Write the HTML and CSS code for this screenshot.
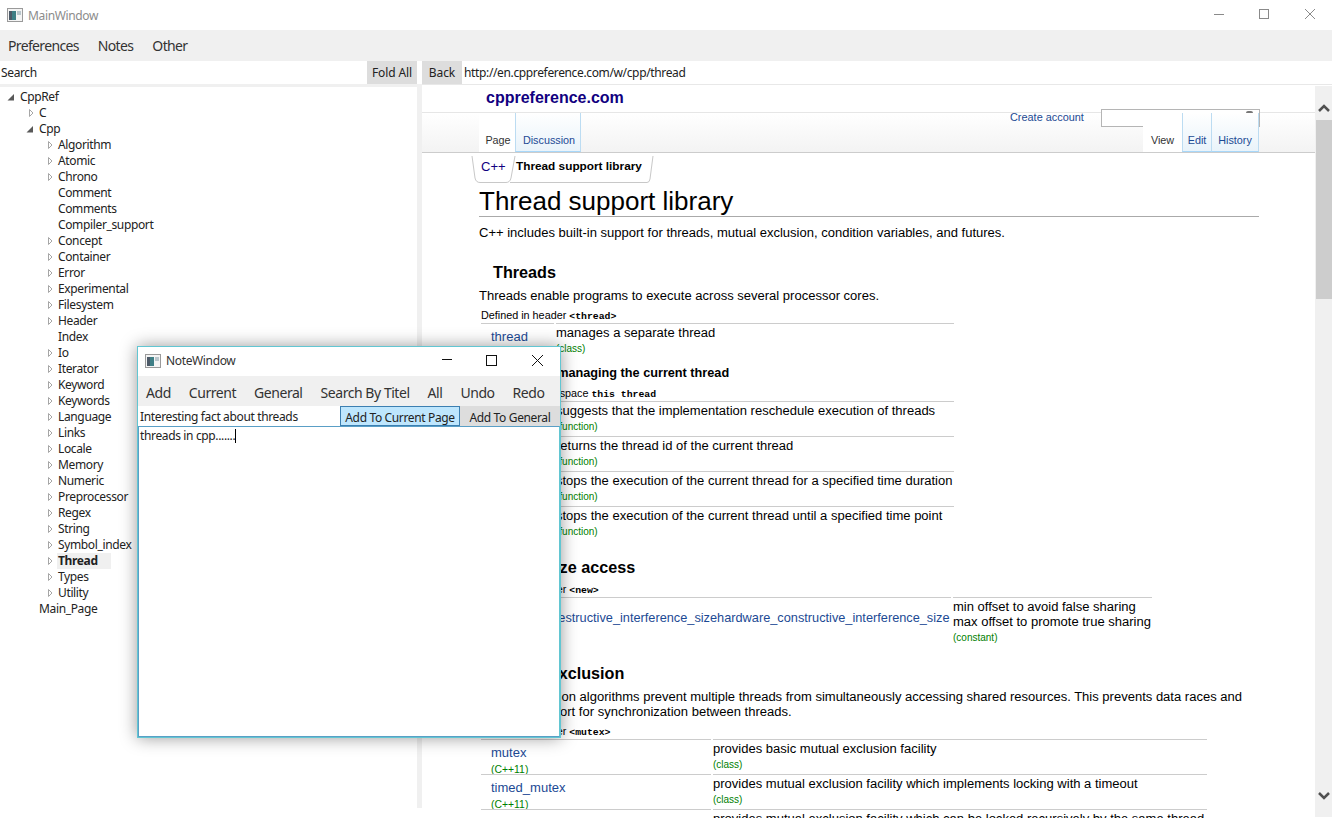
FILE: index.html
```html
<!DOCTYPE html>
<html lang="en">
  <head>
    <meta charset="UTF-8" />
    <title>MainWindow</title>
    <link rel="stylesheet" href="styles.css">
  </head>
  <body>
    <svg class="defs" width="0" height="0">
      <symbol id="tw-closed" viewBox="0 0 10 10"><path d="M4.5 1.5 L8 5 L4.5 8.5 Z" fill="#fff" stroke="#a6a6a6" /></symbol>
      <symbol id="tw-open" viewBox="0 0 10 10"><path d="M8 2 V8.5 H1.5 Z" fill="#595959" /></symbol>
      <symbol id="app-icon" viewBox="0 0 16 14">
        <rect x="0.5" y="0.5" width="15" height="13" fill="#f4f4f4" stroke="#9a9a9a" />
        <rect x="2" y="3" width="7" height="9" fill="#3f7f86" />
        <rect x="2" y="3" width="3" height="9" fill="#4d5a68" />
        <rect x="10" y="3" width="4" height="4" fill="#b9c6cc" />
      </symbol>
    </svg>

    <div class="app">
      <div class="titlebar">
        <svg class="app-icon"><use href="#app-icon" /></svg>
        <span class="title">MainWindow</span>
        <div class="win-btns">
          <svg width="46" height="30" viewBox="0 0 46 30"><path d="M20 14.5 H30" /></svg>
          <svg width="46" height="30" viewBox="0 0 46 30"><rect x="19.5" y="9.5" width="9" height="9" /></svg>
          <svg width="46" height="30" viewBox="0 0 46 30"><path d="M19 9 L29 19 M29 9 L19 19" /></svg>
        </div>
      </div>

      <div class="menubar">
        <span>Preferences</span>
        <span>Notes</span>
        <span>Other</span>
      </div>

      <div class="main">
        <div class="left">
          <div class="searchrow">
            <span class="searchbox">Search</span>
            <span class="btn foldall">Fold All</span>
          </div>
          <ul class="tree">
            <li>
              <div class="node"><svg class="tw"><use href="#tw-open" /></svg>CppRef</div>
              <ul>
                <li><div class="node"><svg class="tw"><use href="#tw-closed" /></svg>C</div></li>
                <li>
                  <div class="node"><svg class="tw"><use href="#tw-open" /></svg>Cpp</div>
                  <ul>
                    <li><div class="node"><svg class="tw"><use href="#tw-closed" /></svg>Algorithm</div></li>
                    <li><div class="node"><svg class="tw"><use href="#tw-closed" /></svg>Atomic</div></li>
                    <li><div class="node"><svg class="tw"><use href="#tw-closed" /></svg>Chrono</div></li>
                    <li><div class="node leaf">Comment</div></li>
                    <li><div class="node leaf">Comments</div></li>
                    <li><div class="node leaf">Compiler_support</div></li>
                    <li><div class="node"><svg class="tw"><use href="#tw-closed" /></svg>Concept</div></li>
                    <li><div class="node"><svg class="tw"><use href="#tw-closed" /></svg>Container</div></li>
                    <li><div class="node"><svg class="tw"><use href="#tw-closed" /></svg>Error</div></li>
                    <li><div class="node"><svg class="tw"><use href="#tw-closed" /></svg>Experimental</div></li>
                    <li><div class="node"><svg class="tw"><use href="#tw-closed" /></svg>Filesystem</div></li>
                    <li><div class="node"><svg class="tw"><use href="#tw-closed" /></svg>Header</div></li>
                    <li><div class="node leaf">Index</div></li>
                    <li><div class="node"><svg class="tw"><use href="#tw-closed" /></svg>Io</div></li>
                    <li><div class="node"><svg class="tw"><use href="#tw-closed" /></svg>Iterator</div></li>
                    <li><div class="node"><svg class="tw"><use href="#tw-closed" /></svg>Keyword</div></li>
                    <li><div class="node"><svg class="tw"><use href="#tw-closed" /></svg>Keywords</div></li>
                    <li><div class="node"><svg class="tw"><use href="#tw-closed" /></svg>Language</div></li>
                    <li><div class="node"><svg class="tw"><use href="#tw-closed" /></svg>Links</div></li>
                    <li><div class="node"><svg class="tw"><use href="#tw-closed" /></svg>Locale</div></li>
                    <li><div class="node"><svg class="tw"><use href="#tw-closed" /></svg>Memory</div></li>
                    <li><div class="node"><svg class="tw"><use href="#tw-closed" /></svg>Numeric</div></li>
                    <li><div class="node"><svg class="tw"><use href="#tw-closed" /></svg>Preprocessor</div></li>
                    <li><div class="node"><svg class="tw"><use href="#tw-closed" /></svg>Regex</div></li>
                    <li><div class="node"><svg class="tw"><use href="#tw-closed" /></svg>String</div></li>
                    <li><div class="node"><svg class="tw"><use href="#tw-closed" /></svg>Symbol_index</div></li>
                    <li><div class="node"><svg class="tw"><use href="#tw-closed" /></svg><b class="selected">Thread</b></div></li>
                    <li><div class="node"><svg class="tw"><use href="#tw-closed" /></svg>Types</div></li>
                    <li><div class="node"><svg class="tw"><use href="#tw-closed" /></svg>Utility</div></li>
                  </ul>
                </li>
                <li><div class="node leaf">Main_Page</div></li>
              </ul>
            </li>
          </ul>
        </div>

        <div class="splitter"></div>

        <div class="right">
          <div class="urlrow">
            <span class="btn back">Back</span>
            <span class="url">http://en.cppreference.com/w/cpp/thread</span>
          </div>
          <div class="browser">
            <div class="webpage">
              <div class="site-head"><span class="logo">cppreference.com</span></div>
              <div class="site-nav">
                <span class="create">Create account</span>
                <span class="site-search"></span>
                <div class="tabs">
                  <span class="tab current t-page">Page</span>
                  <span class="tab t-discussion">Discussion</span>
                </div>
                <div class="tabs">
                  <span class="tab current t-view">View</span>
                  <span class="tab t-edit">Edit</span>
                  <span class="tab t-history">History</span>
                </div>
              </div>

              <div class="content">
                <div class="crumbs">
                  <svg class="crumb-lines" width="190" height="31" viewBox="0 0 190 31">
                    <path d="M2 3 L5 25 Q6 29.5 10 29.5 H36 Q40 29.5 41 25 L45 3 M40 29.5 H177 Q179.5 29.5 180 26 L183 3" />
                  </svg>
                  <span class="crumb">C++</span>
                  <b class="crumb-here">Thread support library</b>
                </div>
                <h1>Thread support library</h1>
                <p class="intro">C++ includes built-in support for threads, mutual exclusion, condition variables, and futures.</p>

                <h3>Threads</h3>
                <p class="text">Threads enable programs to execute across several processor cores.</p>
                <div class="defined">Defined in header <code>&lt;thread&gt;</code></div>
                <div class="dsc cols-thread">
                  <div class="dsc-row">
                    <div class="dsc-name"><a>thread</a></div>
                    <div class="dsc-text">manages a separate thread<small>(class)</small></div>
                  </div>
                </div>

                <h4>Functions managing the current thread</h4>
                <div class="defined short">Defined in namespace <code>this thread</code></div>
                <div class="dsc cols-thread">
                  <div class="dsc-row">
                    <div class="dsc-name"><a>yield</a></div>
                    <div class="dsc-text">suggests that the implementation reschedule execution of threads<small>(function)</small></div>
                  </div>
                  <div class="dsc-row">
                    <div class="dsc-name"><a>get_id</a></div>
                    <div class="dsc-text">returns the thread id of the current thread<small>(function)</small></div>
                  </div>
                  <div class="dsc-row">
                    <div class="dsc-name"><a>sleep_for</a></div>
                    <div class="dsc-text">stops the execution of the current thread for a specified time duration<small>(function)</small></div>
                  </div>
                  <div class="dsc-row">
                    <div class="dsc-name"><a>sleep_until</a></div>
                    <div class="dsc-text">stops the execution of the current thread until a specified time point<small>(function)</small></div>
                  </div>
                </div>

                <h3 class="cache">Cache size access</h3>
                <div class="defined">Defined in header <code>&lt;new&gt;</code></div>
                <div class="dsc cols-cache">
                  <div class="dsc-row tall">
                    <div class="dsc-name wide"><a>hardware_destructive_interference_sizehardware_constructive_interference_size</a></div>
                    <div class="dsc-text">min offset to avoid false sharing<br />max offset to promote true sharing<small>(constant)</small></div>
                  </div>
                </div>

                <h3 class="cache">Mutual exclusion</h3>
                <p class="text">Mutual exclusion algorithms prevent multiple threads from simultaneously accessing shared resources. This prevents data races and provides support for synchronization between threads.</p>
                <div class="defined">Defined in header <code>&lt;mutex&gt;</code></div>
                <div class="dsc cols-mutex">
                  <div class="dsc-row">
                    <div class="dsc-name"><a>mutex</a><small>(C++11)</small></div>
                    <div class="dsc-text">provides basic mutual exclusion facility<small>(class)</small></div>
                  </div>
                  <div class="dsc-row">
                    <div class="dsc-name"><a>timed_mutex</a><small>(C++11)</small></div>
                    <div class="dsc-text">provides mutual exclusion facility which implements locking with a timeout<small>(class)</small></div>
                  </div>
                  <div class="dsc-row">
                    <div class="dsc-name"><a>recursive_mutex</a></div>
                    <div class="dsc-text">provides mutual exclusion facility which can be locked recursively by the same thread</div>
                  </div>
                </div>
              </div>
            </div>

            <div class="scrollbar">
              <div class="sb-btn">
                <svg width="12" height="8" viewBox="0 0 12 8"><path d="M1 7 L6 2 L11 7" /></svg>
              </div>
              <div class="sb-thumb"></div>
              <div class="sb-btn down">
                <svg width="12" height="8" viewBox="0 0 12 8"><path d="M1 1 L6 6 L11 1" /></svg>
              </div>
            </div>
          </div>
        </div>
      </div>

      <div class="notewin">
        <div class="titlebar note-title">
          <svg class="app-icon"><use href="#app-icon" /></svg>
          <span class="title">NoteWindow</span>
          <div class="win-btns">
            <svg width="46" height="30" viewBox="0 0 46 30"><path d="M20 13.5 H30" /></svg>
            <svg width="46" height="30" viewBox="0 0 46 30"><rect x="18.5" y="9.5" width="10" height="10" /></svg>
            <svg width="46" height="30" viewBox="0 0 46 30"><path d="M18 9 L29 20 M29 9 L18 20" /></svg>
          </div>
        </div>
        <div class="menubar note-menu">
          <span>Add</span>
          <span>Current</span>
          <span>General</span>
          <span>Search By Titel</span>
          <span>All</span>
          <span>Undo</span>
          <span>Redo</span>
        </div>
        <div class="noterow">
          <span class="notetitle">Interesting fact about threads</span>
          <span class="btn addcurrent">Add To Current Page</span>
          <span class="btn addgeneral">Add To General</span>
        </div>
        <div class="notebody">threads in cpp.......<span class="caret"></span></div>
      </div>
    </div>
  </body>
</html>
```

FILE: styles.css
```css
* {
  box-sizing: border-box;
}
html,
body {
  margin: 0;
  height: 100%;
  overflow: hidden;
}
body {
  font-family: "Noto Sans", "Liberation Sans", sans-serif;
  font-size: 12px;
  letter-spacing: -0.36px;
  color: #222;
  background-color: #fff;
}
.defs {
  position: absolute;
}
.app {
  position: relative;
  width: 1332px;
  height: 818px;
  overflow: hidden;
}

/* window chrome */
.titlebar {
  display: flex;
  align-items: center;
  height: 30px;
  padding-left: 7px;
}
.app-icon {
  width: 16px;
  height: 14px;
  margin-right: 5px;
}
.title {
  color: #8c8c8c;
}
.win-btns {
  display: flex;
  margin-left: auto;
}
.win-btns svg {
  fill: none;
  stroke: #8a8a8a;
}
.menubar {
  display: flex;
  align-items: center;
  gap: 19px;
  height: 31px;
  padding-left: 8px;
  font-size: 14px;
  letter-spacing: -0.65px;
  color: #333;
  background-color: #f0f0f0;
}
.btn {
  display: flex;
  align-items: center;
  justify-content: center;
  background-color: #ddd;
}

.main {
  display: flex;
}
.left {
  width: 417px;
  height: 747px;
}
.searchrow {
  display: flex;
  height: 26px;
  border-bottom: 3px solid #f0f0f0;
}
.searchbox {
  flex: 1;
  padding-left: 1px;
  line-height: 23px;
}
.foldall {
  width: 50px;
  letter-spacing: -0.1px;
}

.tree,
.tree ul {
  margin: 0;
  padding: 0;
  list-style: none;
}
.tree {
  padding: 2px 0 0 1px;
}
.tree ul {
  padding-left: 19px;
}
.node {
  display: flex;
  align-items: center;
  height: 16px;
  line-height: 16px;
}
.node.leaf {
  padding-left: 19px;
}
.tw {
  width: 10px;
  height: 10px;
  margin: 0 4px 0 5px;
}
.selected {
  width: 54px;
  margin-left: -1px;
  padding-left: 1px;
  background-color: #f0f0f0;
}

.splitter {
  width: 5px;
  height: 724px;
  margin-top: 23px;
  background-color: #f0f0f0;
}

.right {
  display: flex;
  flex-direction: column;
  width: 910px;
  height: 757px;
}
.urlrow {
  display: flex;
  height: 24px;
  flex-shrink: 0;
  border-bottom: 1px solid #e8e8e8;
}
.back {
  width: 40px;
  letter-spacing: -0.1px;
}
.url {
  padding-left: 2px;
  line-height: 23px;
}
.browser {
  display: flex;
  flex: 1;
  min-height: 0;
}

/* the page inside the web view */
.webpage {
  width: 893px;
  overflow: hidden;
  font-family: "Liberation Sans", Arial, sans-serif;
  font-size: 13.03px;
  letter-spacing: 0;
  color: #000;
}
.site-head {
  height: 27px;
  padding-left: 64px;
}
.logo {
  font-size: 16px;
  font-weight: bold;
  line-height: 26px;
  color: #11007f;
}
.site-nav {
  position: relative;
  display: flex;
  justify-content: space-between;
  align-items: flex-end;
  width: 893px;
  height: 41px;
  padding: 0 56px 0 57px;
  border-top: 1px solid #e6e6e6;
  border-bottom: 1px solid #ccc;
  background: linear-gradient(#fff, #f3f3f3);
}
.create {
  position: absolute;
  left: 588px;
  top: -1px;
  font-size: 10.9px;
  line-height: 10px;
  color: #1c4a94;
}
.site-search {
  position: absolute;
  left: 679px;
  top: -4px;
  width: 159px;
  height: 18px;
  border: 1px solid #b5b5b5;
  background-color: #fff;
}
.site-search::after {
  content: "";
  position: absolute;
  right: 6px;
  top: 1px;
  width: 7px;
  height: 2px;
  border-radius: 3px 3px 0 0;
  background-color: #777;
}
.tabs {
  position: relative;
  display: flex;
}
.tab {
  height: 39px;
  padding-top: 20px;
  font-size: 10.8px;
  line-height: 15px;
  text-align: center;
  color: #1c4a94;
  border-right: 1px solid #bcdcf2;
  border-bottom: 1px solid #a7d7f9;
  background: linear-gradient(#fff, #e9f3fa);
}
.tab.current {
  color: #333;
  border-bottom: 0;
  border-right: 0;
  background: #fff;
}
.t-page {
  width: 36px;
  padding-left: 2px;
}
.t-discussion {
  width: 66px;
  padding-left: 2px;
  border-left: 1px solid #bcdcf2;
}
.t-view {
  width: 39px;
}
.t-edit {
  width: 30px;
  border-left: 1px solid #bcdcf2;
}
.t-history {
  width: 47px;
}

.content {
  width: 780px;
  margin-left: 57px;
}
.crumbs {
  position: relative;
  display: flex;
  height: 30px;
  padding: 6px 0 0 2px;
  line-height: 15px;
}
.crumb-lines {
  position: absolute;
  left: -9px;
  top: 0;
  fill: none;
  stroke: #c8c8c8;
}
.crumb {
  width: 35px;
  color: #11007f;
}
.crumb-here {
  font-size: 11.8px;
}
h1 {
  height: 34px;
  margin: 0;
  font-size: 26px;
  font-weight: normal;
  line-height: 37px;
  border-bottom: 1px solid #aaa;
}
.intro {
  margin: 8px 0 0;
  line-height: 15px;
}
h3 {
  height: 20px;
  margin: 22px 0 0;
  padding-left: 14px;
  font-size: 16.2px;
  line-height: 20px;
}
h3.cache {
  margin-top: 16px;
}
h4 {
  height: 16px;
  margin: 6px 0 0;
  padding-left: 14px;
  font-size: 12.7px;
  line-height: 18px;
}
.text {
  margin: 6px 0 0;
  line-height: 15px;
}
.defined {
  height: 13px;
  margin: 6px 0 0 2px;
  font-size: 10.8px;
  line-height: 13px;
}
.defined.short {
  margin-top: 7px;
}
code {
  font-family: "Liberation Mono", monospace;
  font-weight: bold;
  font-size: 9.8px;
}
.dsc {
  margin: 1px 0 0 2px;
}
.dsc-row {
  display: grid;
  column-gap: 2px;
  height: 35px;
}
.dsc-row.tall {
  height: 50px;
}
.cols-thread {
  width: 473px;
}
.cols-thread .dsc-row {
  grid-template-columns: 73px 1fr;
}
.cols-cache {
  width: 671px;
}
.cols-cache .dsc-row {
  grid-template-columns: 470px 1fr;
}
.cols-mutex {
  width: 726px;
}
.cols-mutex .dsc-row {
  grid-template-columns: 230px 1fr;
}
.dsc-name,
.dsc-text {
  border-top: 1px solid #ccc;
}
.dsc-name {
  padding: 5px 0 0 10px;
  line-height: 15px;
}
.dsc-name.wide {
  padding-top: 12px;
  font-size: 12.75px;
  white-space: nowrap;
}
.dsc-text {
  padding-top: 1px;
  line-height: 15px;
}
.dsc a {
  color: #1c4a94;
}
.dsc small {
  display: block;
  font-size: 10px;
  line-height: 16px;
  color: #008000;
}
.dsc-text small {
  margin-top: 1px;
}
.dsc-name small {
  font-size: 10.4px;
  line-height: 20px;
}

.scrollbar {
  display: flex;
  flex-direction: column;
  width: 17px;
  height: 731px;
  margin-top: 1px;
  padding-left: 1px;
  background-color: #f0f0f0;
}
.sb-btn {
  display: flex;
  justify-content: center;
  height: 34px;
  padding-top: 18px;
}
.sb-btn.down {
  margin-top: auto;
  padding-top: 9px;
}
.sb-btn path {
  fill: none;
  stroke: #505050;
  stroke-width: 2.5;
}
.sb-thumb {
  height: 179px;
  background-color: #cdcdcd;
}

/* floating note window */
.notewin {
  position: absolute;
  left: 137px;
  top: 346px;
  display: flex;
  flex-direction: column;
  width: 424px;
  height: 392px;
  border: 1px solid #62c6d2;
  background-color: #fff;
  box-shadow: 0 0 16px rgba(0, 0, 0, 0.4);
}
.note-title {
  height: 29px;
  padding: 0 0 2px 7px;
  flex-shrink: 0;
}
.note-title .title {
  color: #333;
}
.note-title .win-btns svg {
  stroke: #111;
}
.note-menu {
  height: 30px;
  padding-top: 2px;
  gap: 18px;
  letter-spacing: -0.45px;
  flex-shrink: 0;
}
.noterow {
  display: flex;
  height: 20px;
  flex-shrink: 0;
}
.notetitle {
  flex: 1;
  padding-left: 2px;
  line-height: 22px;
}
.addcurrent {
  width: 120px;
  padding-top: 2px;
  border: 1px solid #3c7fb1;
  background-color: #bee6fd;
}
.addgeneral {
  width: 100px;
  padding-top: 2px;
}
.notebody {
  flex: 1;
  padding: 1px 1px 0;
  line-height: 16px;
  border: 1px solid #5a9fc6;
  border-right-color: #62c6d2;
}
.caret {
  display: inline-block;
  width: 1px;
  height: 14px;
  margin-bottom: -3px;
  background-color: #000;
}
```
